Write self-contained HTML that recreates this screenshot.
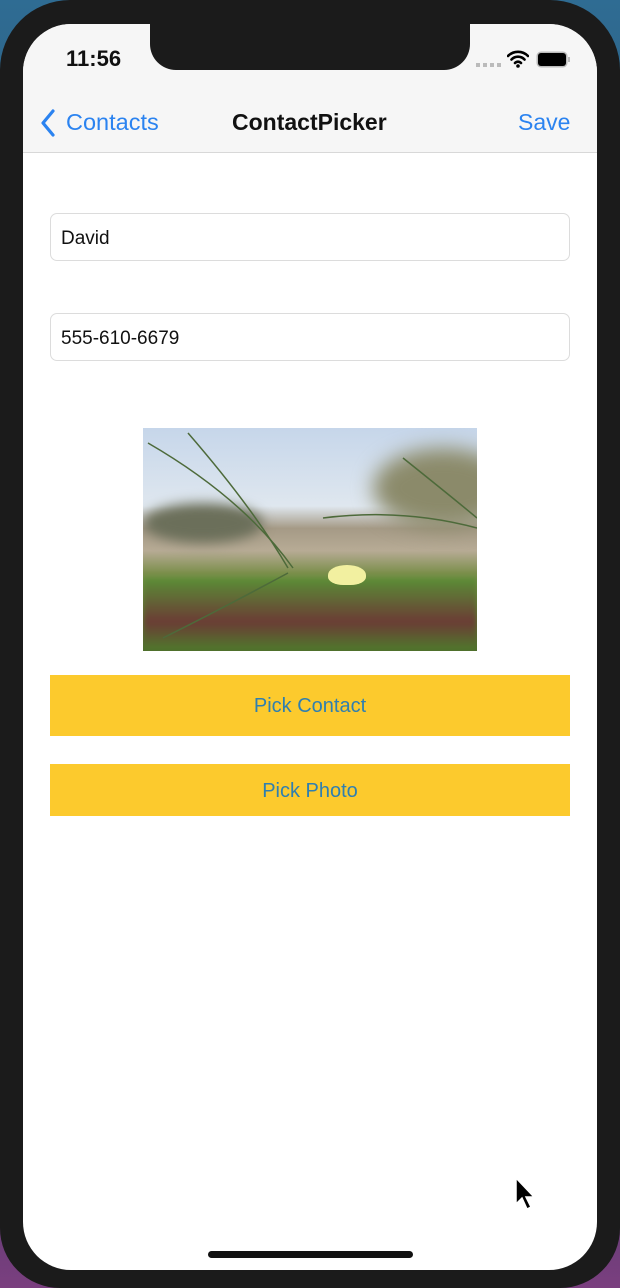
<!DOCTYPE html>
<html><head><style>
body{margin:0;width:620px;height:1288px;overflow:hidden;background:linear-gradient(180deg,#2f6c93 0%,#2a4a66 40%,#4a3a6a 85%,#7a3f7f 100%);font-family:"Liberation Sans",sans-serif;position:relative}
.frame{position:absolute;left:0;top:0;width:620px;height:1288px;background:#1b1b1b;border-radius:70px 70px 60px 60px}
.screen{position:absolute;left:23px;top:24px;width:574px;height:1246px;background:#fff;border-radius:48px;overflow:hidden}
.nav{position:absolute;left:0;top:0;width:574px;height:128px;background:#f6f6f6;border-bottom:1px solid #d8d8d8}
.notch{position:absolute;left:127px;top:0;width:320px;height:46px;background:#1b1b1b;border-radius:0 0 26px 26px}
.abs{position:absolute}
.field{position:absolute;left:27px;width:520px;height:48px;border:1px solid #dcdcdc;border-radius:7px;font-size:19px;line-height:49px;padding-left:10px;box-sizing:border-box;color:#111}
.btn{position:absolute;left:27px;width:520px;background:#fcca2d;color:#2f7fb0;font-size:20px;text-align:center}
</style></head><body>
<div class="frame"></div>
<div class="screen">
<div class="nav">
 <div class="abs" style="left:43px;top:22px;font-size:22px;font-weight:bold;color:#111">11:56</div>
 <div class="abs" style="left:453px;top:39px;width:26px;height:4px;background:repeating-linear-gradient(90deg,#bbb 0 4px,transparent 4px 7px)"></div>
 <svg class="abs" style="left:484px;top:26px" width="22" height="18" viewBox="0 0 22 18"><path d="M1 6a14 14 0 0 1 20 0M4.5 9.5a9 9 0 0 1 13 0M8 13a4 4 0 0 1 6 0" stroke="#000" stroke-width="2.6" fill="none" stroke-linecap="round"/><circle cx="11" cy="16" r="1.8"/></svg>
 <div class="abs" style="left:515px;top:29px;width:28px;height:13px;background:#000;border-radius:3px;box-shadow:0 0 0 1.5px #bbb"></div>
 <div class="abs" style="left:545px;top:33px;width:2px;height:5px;background:#bbb"></div>
 <svg class="abs" style="left:17px;top:85px" width="16" height="28" viewBox="0 0 16 28"><path d="M13 2L3 14l10 12" stroke="#2b83f0" stroke-width="3.2" fill="none" stroke-linecap="round" stroke-linejoin="round"/></svg>
 <div class="abs" style="left:43px;top:85px;font-size:23.5px;color:#2b83f0">Contacts</div>
 <div class="abs" style="left:209px;top:85px;font-size:23px;font-weight:bold;color:#111">ContactPicker</div>
 <div class="abs" style="left:495px;top:85px;font-size:23px;color:#2b83f0">Save</div>
</div>
<div class="notch"></div>
<div class="field" style="top:189px">David</div>
<div class="field" style="top:289px">555-610-6679</div>
<div class="abs" style="left:120px;top:404px;width:334px;height:223px;overflow:hidden;background:linear-gradient(180deg,#c6d6ea 0%,#dfe7ef 35%,#a59a86 45%,#b7ab95 55%,#7c8f4c 65%,#5c8a32 80%,#4d6a2c 100%)">
 <div class="abs" style="left:0;top:75px;width:120px;height:40px;background:#6b6f5a;border-radius:50%;filter:blur(6px)"></div>
 <div class="abs" style="left:230px;top:20px;width:140px;height:80px;background:#8b8a6a;border-radius:50%;filter:blur(10px)"></div>
 <div class="abs" style="left:0;top:150px;width:334px;height:73px;background:linear-gradient(180deg,#5a8e36,#6b3c35 60%,#4e7a2c);filter:blur(3px)"></div>
 <svg class="abs" style="left:0;top:0" width="334" height="223"><g stroke="#4d6a3a" stroke-width="1.5" fill="none"><path d="M5 15Q100 70 150 140"/><path d="M45 5Q110 80 145 140"/><path d="M180 90Q260 80 334 100"/><path d="M260 30Q310 70 334 90"/><path d="M20 210Q80 180 145 145"/></g></svg>
 <div class="abs" style="left:185px;top:137px;width:38px;height:20px;background:#f2f0a0;border-radius:50% 50% 40% 40%"></div>
</div>
<div class="btn" style="top:651px;height:61px;line-height:63px">Pick Contact</div>
<div class="btn" style="top:740px;height:52px;line-height:54px">Pick Photo</div>
<div class="abs" style="left:185px;top:1227px;width:205px;height:7px;background:#111;border-radius:4px"></div>
</div>
<svg class="abs" style="position:absolute;left:514px;top:1176px" width="22" height="36" viewBox="0 0 22 36"><path d="M2 2v26l6-6 5 11 4-2-5-10h8z" fill="#000" stroke="#fff" stroke-width="1.5"/></svg>
</body></html>
